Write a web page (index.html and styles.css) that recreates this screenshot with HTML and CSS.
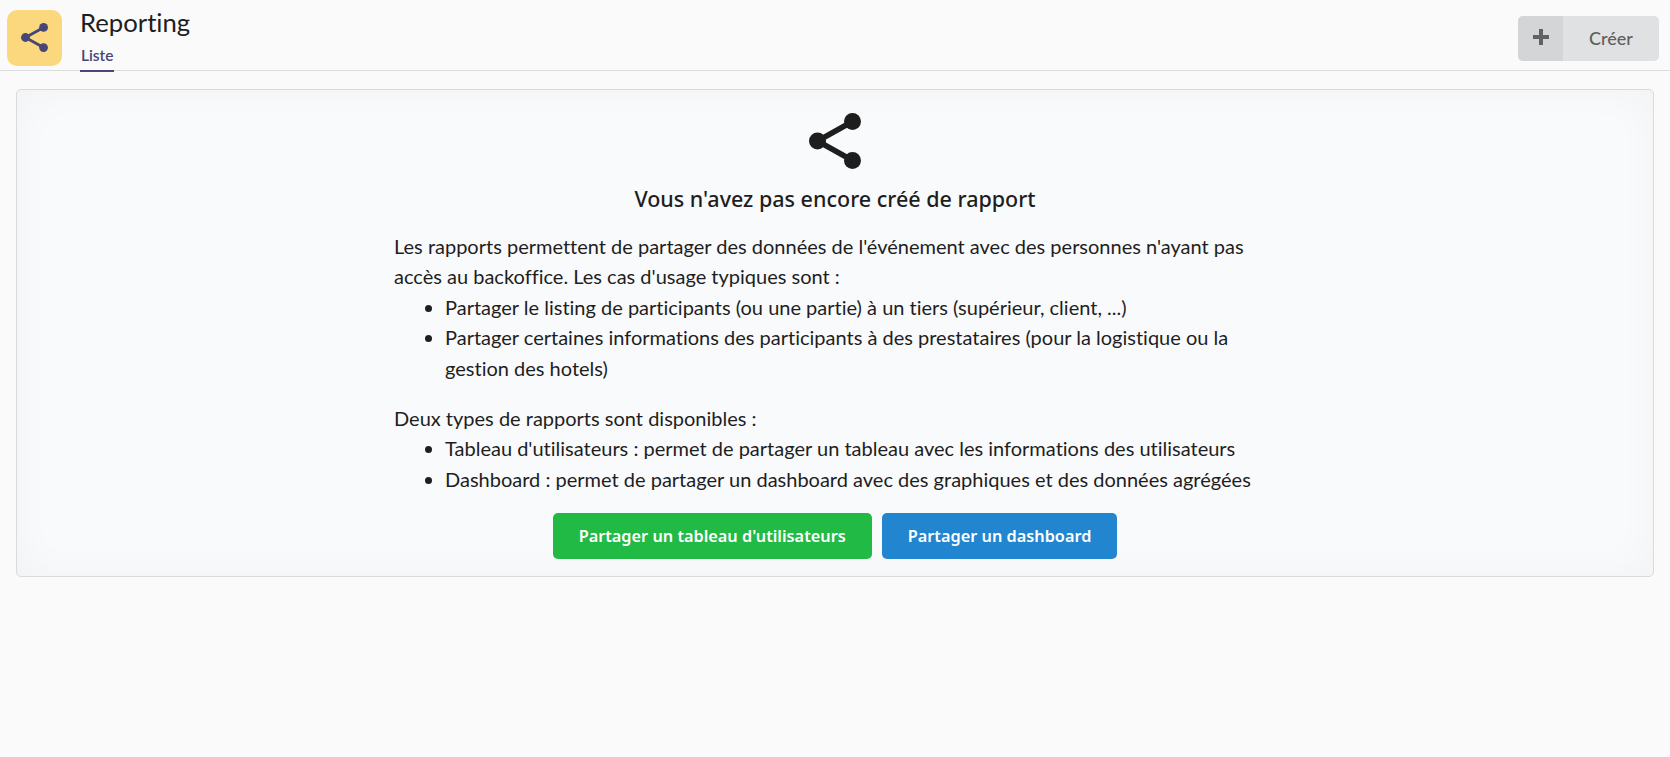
FILE: index.html
```html
<!DOCTYPE html>
<html lang="fr">
<head>
<meta charset="utf-8">
<title>Reporting</title>
<link rel="stylesheet" href="styles.css">
</head>
<body>
<header class="topbar">
  <div class="app-icon">
    <svg class="share share-small" viewBox="0 0 52 56"><use href="#share-shape"/></svg>
  </div>
  <div class="heading">
    <div class="title">Reporting</div>
    <div class="tab">Liste</div>
  </div>
  <button class="create"><span class="create-icon"><svg viewBox="0 0 16 16" class="plus"><path d="M6 0h4v6h6v4h-6v6H6v-6H0V6h6z"/></svg></span><span class="create-label">Créer</span></button>
</header>
<main class="card">
  <svg class="share share-big" viewBox="0 0 52 56"><defs><g id="share-shape"><circle cx="43.500" cy="8.500" r="8.500"/><circle cx="8.500" cy="28" r="8.500"/><circle cx="43.500" cy="47.500" r="8.500"/><path d="M43.500 8.500 8.500 28 43.500 47.500" fill="none" stroke="currentColor" stroke-width="5.500"/></g></defs><use href="#share-shape"/></svg>
  <h2 class="empty-title">Vous n'avez pas encore créé de rapport</h2>
  <div class="text">
    Les rapports permettent de partager des données de l'événement avec des personnes n'ayant pas accès au backoffice. Les cas d'usage typiques sont :
    <ul>
      <li>Partager le listing de participants (ou une partie) à un tiers (supérieur, client, ...)</li>
      <li>Partager certaines informations des participants à des prestataires (pour la logistique ou la gestion des hotels)</li>
    </ul>
    Deux types de rapports sont disponibles :
    <ul class="last">
      <li>Tableau d'utilisateurs : permet de partager un tableau avec les informations des utilisateurs</li>
      <li>Dashboard : permet de partager un dashboard avec des graphiques et des données agrégées</li>
    </ul>
  </div>
  <div class="actions">
    <button class="btn btn-green">Partager un tableau d'utilisateurs</button>
    <button class="btn btn-blue">Partager un dashboard</button>
  </div>
</main>
</body>
</html>
```
FILE: styles.css
```css
* { box-sizing: border-box; }
html, body { margin: 0; height: 100%; }
body {
  background: #fafafa;
  color: #1e1e1e;
  font-family: Lato, "Liberation Sans", sans-serif;
  font-size: 20px;
  font-variant-ligatures: none;
  overflow: hidden;
}
.topbar {
  display: flex;
  align-items: flex-start;
  height: 71px;
  border-bottom: 1px solid #dcdcdc;
  padding: 10px 11px 0 7px;
}
.app-icon {
  width: 55px;
  height: 56px;
  padding-bottom: 1px;
  border-radius: 10px;
  background: #fbd77e;
  color: #474675;
  display: flex;
  align-items: center;
  justify-content: center;
  flex: none;
}
.share { fill: currentColor; display: block; }
.share-small { width: 27px; height: 29px; }
.share-big { width: 52px; height: 56px; margin: 0 auto; color: #1e1e1e; }
.heading { margin-left: 18px; flex: 1; }
.title { font-size: 25.7px; line-height: 30px; margin-top: -3px; }
.tab {
  display: inline-block;
  font-size: 15.5px;
  font-weight: 600;
  line-height: 20px;
  margin-top: 8px;
  padding: 0 1px 5px;
  color: #474675;
  border-bottom: 2px solid #474675;
}
.create {
  display: flex;
  align-items: stretch;
  margin: 6px 0 0;
  width: 141px;
  height: 45px;
  padding: 0;
  border: 0;
  border-radius: 5px;
  overflow: hidden;
  background: #e0e1e2;
  color: #5f5f5f;
  font: 500 18px Lato, sans-serif;
}
.create-icon {
  width: 45px;
  padding-bottom: 3px;
  background: #d4d5d6;
  display: flex;
  align-items: center;
  justify-content: center;
}
.plus { width: 16px; height: 16px; fill: #626262; }
.create-label { flex: 1; align-self: center; text-align: center; padding-bottom: 2px; }
.card {
  margin: 18px 16px 0;
  height: 488px;
  border: 1px solid #d9dadb;
  border-radius: 5px;
  background: #f9fafc;
  box-shadow: inset 0 0 40px rgba(0,0,0,.035);
  padding: 23px 0 0;
}
.empty-title {
  margin: 15px 0 0;
  font: 500 21.5px/30px "Noto Sans", sans-serif;
  text-align: center;
}
.text {
  width: 884px;
  margin: 16.500px 0 0 377px;
  line-height: 30.5px;
}
ul { margin: 0 0 19.5px; padding-left: 51px; }
ul.last { margin-bottom: 0; }
.actions {
  display: flex;
  justify-content: center;
  gap: 10px;
  margin-top: 18.500px;
}
.btn {
  height: 46px;
  border: 0;
  border-radius: 5px;
  padding: 0 26px;
  color: #fff;
  font: 600 16.3px "Noto Sans", sans-serif;
}
.btn-green { background: #21ba45; }
.btn-blue { background: #2185d0; }
```
